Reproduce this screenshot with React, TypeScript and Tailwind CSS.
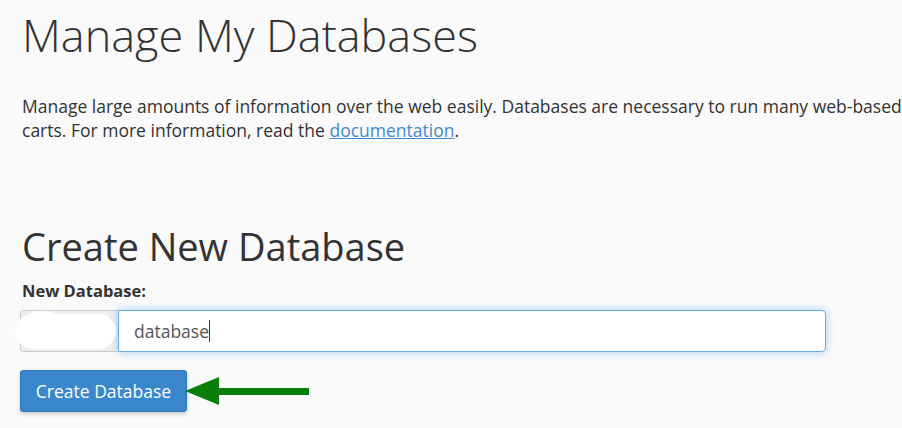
export default function App() {
  return (
    <div className="w-[902px] h-[428px] overflow-hidden bg-[#fafafa] text-[#333] font-['Open_Sans',sans-serif]">
      <div className="pl-[22px] pt-[10px]">
        <h1 className="text-[45px] leading-[50px] font-light whitespace-nowrap">Manage My Databases</h1>

        <p className="mt-[34px] text-[17.5px] leading-[24px] whitespace-nowrap">
          Manage large amounts of information over the web easily. Databases are necessary to run many web-based
          <br />
          carts. For more information, read the{" "}
          <a href="#" className="text-[#428bca] underline">documentation</a>.
        </p>

        <h2 className="mt-[82px] text-[38px] leading-[44px] font-medium whitespace-nowrap">Create New Database</h2>

        <label className="block mt-[13px] text-[16.5px] leading-[20px] font-bold">New Database:</label>

        {/* input group */}
        <div className="relative mt-[9px] -ml-[2px] flex w-[806px] h-[42px]">
          <span className="w-[98px] bg-[#eeeeee] border border-r-0 border-[#cccccc] rounded-l-[4px]" />
          <div className="flex-1 flex items-center bg-white border border-[#66afe9] rounded-r-[4px] shadow-[0_0_8px_rgba(102,175,233,0.6)] pl-[15px] text-[17.5px] text-[#555]">
            database<span className="w-px h-[22px] bg-[#333]" />
          </div>
          {/* redaction blob */}
          <div className="absolute left-[-5px] top-[4px] w-[101px] h-[35px] rounded-full bg-white" />
          <div className="absolute left-[6px] top-[1px] w-[32px] h-[22px] rounded-full bg-white" />
        </div>

        <div className="mt-[18px] -ml-[2px] flex items-center">
          <button className="h-[42px] w-[167px] bg-[#3a87cc] text-white text-[17.5px] rounded-[3px] border border-[#2f78bb] shadow-[0_2px_4px_rgba(0,0,0,0.2)]">
            Create Database
          </button>
          <svg width="126" height="30" viewBox="0 0 126 30" className="-ml-[2px]">
            <polygon points="0,15 34,1 34,29" fill="#0b7d0b" />
            <rect x="33" y="12" width="91" height="7" fill="#0b7d0b" />
          </svg>
        </div>
      </div>
    </div>
  );
}
